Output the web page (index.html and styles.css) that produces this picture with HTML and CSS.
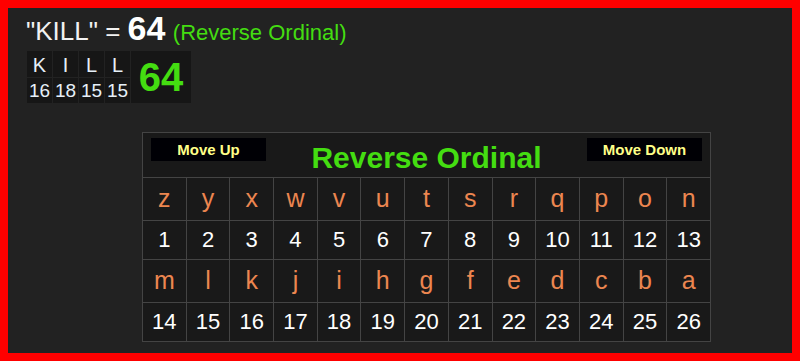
FILE: index.html
```html
<!DOCTYPE html>
<html>
<head>
<meta charset="utf-8">
<link rel="stylesheet" href="styles.css">
</head>
<body>
<div class="page">
  <div class="headline">
    <span class="word">"KILL" = </span><span class="total">64</span> <span class="cipher">(Reverse Ordinal)</span>
  </div>
  <div class="breakdown">
    <div class="bcol"><div class="bl">K</div><div class="bn">16</div></div>
    <div class="bcol"><div class="bl">I</div><div class="bn">18</div></div>
    <div class="bcol"><div class="bl">L</div><div class="bn">15</div></div>
    <div class="bcol"><div class="bl">L</div><div class="bn">15</div></div>
    <div class="bsum">64</div>
  </div>
  <div class="chart">
    <div class="chart-head">
      <button class="move">Move Up</button>
      <div class="chart-title">Reverse Ordinal</div>
      <button class="move">Move Down</button>
    </div>
    <div class="cl">z</div><div class="cl">y</div><div class="cl">x</div><div class="cl">w</div><div class="cl">v</div><div class="cl">u</div><div class="cl">t</div><div class="cl">s</div><div class="cl">r</div><div class="cl">q</div><div class="cl">p</div><div class="cl">o</div><div class="cl">n</div>
    <div class="cn">1</div><div class="cn">2</div><div class="cn">3</div><div class="cn">4</div><div class="cn">5</div><div class="cn">6</div><div class="cn">7</div><div class="cn">8</div><div class="cn">9</div><div class="cn">10</div><div class="cn">11</div><div class="cn">12</div><div class="cn">13</div>
    <div class="cl">m</div><div class="cl">l</div><div class="cl">k</div><div class="cl">j</div><div class="cl">i</div><div class="cl">h</div><div class="cl">g</div><div class="cl">f</div><div class="cl">e</div><div class="cl">d</div><div class="cl">c</div><div class="cl">b</div><div class="cl">a</div>
    <div class="cn">14</div><div class="cn">15</div><div class="cn">16</div><div class="cn">17</div><div class="cn">18</div><div class="cn">19</div><div class="cn">20</div><div class="cn">21</div><div class="cn">22</div><div class="cn">23</div><div class="cn">24</div><div class="cn">25</div><div class="cn">26</div>
  </div>
</div>
</body>
</html>
```
FILE: styles.css
```css
html, body {
  margin: 0;
  padding: 0;
}
body {
  width: 800px;
  height: 361px;
  box-sizing: border-box;
  border: 8px solid #ff0000;
  background: #222222;
  font-family: "Liberation Sans", Arial, sans-serif;
  overflow: hidden;
}
.page {
  display: flex;
  flex-direction: column;
  align-items: flex-start;
  padding: 3px 0 0 18px;
}
.headline {
  height: 37px;
  line-height: 35px;
  white-space: nowrap;
  color: #f2f2f2;
}
.word {
  font-size: 26px;
}
.total {
  font-size: 34px;
  font-weight: bold;
  color: #ffffff;
}
.cipher {
  font-size: 22px;
  color: #44dd11;
  margin-left: 3px;
}
.breakdown {
  display: flex;
  margin-left: 1px;
  margin-top: 3px;
  background: #222222;
  gap: 1px;
}
.bcol {
  display: flex;
  flex-direction: column;
  gap: 1px;
}
.bl, .bn {
  background: #161616;
  color: #e6f0f8;
  text-align: center;
  width: 25px;
}
.bl {
  height: 26px;
  line-height: 28px;
  font-size: 20px;
}
.bn {
  height: 25px;
  line-height: 25px;
  font-size: 19px;
}
.bsum {
  width: 60px;
  background: #161616;
  color: #44dd11;
  font-size: 40px;
  font-weight: bold;
  display: flex;
  align-items: center;
  justify-content: center;
}
.chart {
  margin-left: 116px;
  margin-top: 29px;
  width: 569px;
  box-sizing: border-box;
  display: grid;
  grid-template-columns: repeat(13, 1fr);
  grid-template-rows: 44px 42px 38px 42px 38px;
  gap: 1px;
  padding: 1px;
  background: #444444;
}
.chart-head {
  grid-column: 1 / -1;
  background: #191919;
  display: flex;
  align-items: flex-start;
  justify-content: space-between;
  padding: 5px 8px 0 8px;
}
.move {
  width: 115px;
  height: 23px;
  background: #000005;
  border: none;
  color: #ffff88;
  font-family: "Liberation Sans", Arial, sans-serif;
  font-weight: bold;
  font-size: 15px;
  padding: 0;
}
.chart-title {
  color: #44dd11;
  font-size: 30px;
  font-weight: bold;
  line-height: 34px;
  padding-top: 3px;
}
.cl, .cn {
  background: #191919;
  display: flex;
  align-items: center;
  justify-content: center;
}
.cl {
  color: #ec8650;
  font-size: 25px;
  padding-bottom: 2px;
}
.cn {
  color: #ffffff;
  font-size: 22px;
}
```
